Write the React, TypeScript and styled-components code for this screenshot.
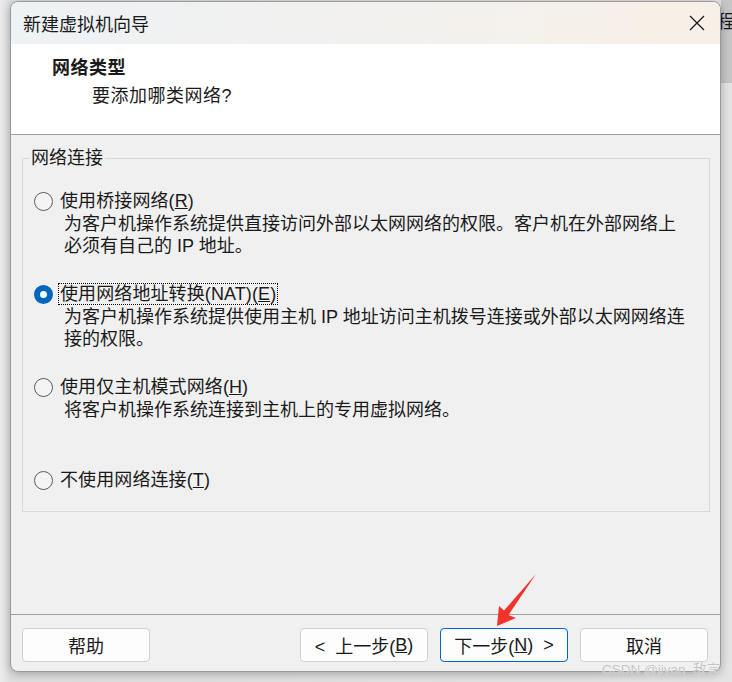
import React from 'react';
import styled, { createGlobalStyle } from 'styled-components';

const GlobalStyle = createGlobalStyle`
  html, body {
    margin: 0;
    padding: 0;
  }
  body {
    width: 732px;
    height: 682px;
    overflow: hidden;
    background: #e2e2e2;
    font-family: "Liberation Sans", "Noto Sans CJK SC", sans-serif;
    color: #1a1a1a;
  }
`;

const Page = styled.div`
  position: relative;
  display: flex;
  align-items: flex-start;
  height: 682px;
  padding: 1px 0 0 10px;
  box-sizing: border-box;
  background: linear-gradient(90deg, #ececec 0px, #dedede 10px, #e4e4e4 100%);
`;

const Dialog = styled.div`
  position: relative;
  z-index: 1;
  width: 711px;
  height: 671px;
  box-sizing: border-box;
  display: flex;
  flex-direction: column;
  border: 1px solid #9a9a9a;
  border-radius: 8px;
  overflow: hidden;
  background: #f0f0f0;
  box-shadow: 0 2px 10px rgba(0, 0, 0, 0.28);
`;

const TitleBar = styled.div`
  height: 42px;
  display: flex;
  align-items: center;
  justify-content: space-between;
  padding-left: 12px;
  background: linear-gradient(90deg, #edf2f5 0%, #f3f1ee 55%, #f8f0e6 100%);
  font-size: 18px;
`;

const CloseButton = styled.div`
  width: 46px;
  height: 42px;
  display: flex;
  align-items: center;
  justify-content: center;
`;

const Header = styled.div`
  height: 91px;
  box-sizing: border-box;
  padding: 13px 0 0 41px;
  background: #fff;
  border-bottom: 1px solid #a0a0a0;
`;

const Heading = styled.div`
  font-size: 18px;
  line-height: 22px;
  font-weight: bold;
  letter-spacing: 0.5px;
`;

const SubHeading = styled.div`
  margin: 6px 0 0 40px;
  font-size: 18px;
  line-height: 22px;
  letter-spacing: 0.5px;
`;

const Body = styled.div`
  flex: 1;
  padding: 12px 10px 0 11px;
`;

const GroupBox = styled.fieldset`
  margin: 0;
  padding: 20px 10px 19px 11px;
  border: 1px solid #d9d9d9;
  min-width: 0;
`;

const Legend = styled.legend`
  margin-left: -5px;
  padding: 0 2px;
  font-size: 18px;
  line-height: 22px;
`;

const Option = styled.div`
  & + & {
    margin-top: 25px;
  }
`;

const OptionRow = styled.div`
  display: flex;
  align-items: center;
  height: 24px;
  gap: 5px;
`;

const Radio = styled.span<{ $checked?: boolean }>`
  width: 19px;
  height: 19px;
  box-sizing: border-box;
  border-radius: 50%;
  border: ${(p) => (p.$checked ? '6px solid #0067c0' : '1px solid #5c5c5c')};
  background: ${(p) => (p.$checked ? '#fff' : '#f4f4f4')};
  flex: none;
`;

const OptionLabel = styled.span<{ $focused?: boolean }>`
  padding: 0 1px;
  font-size: 18px;
  line-height: 20px;
  letter-spacing: 0.1px;
  border: 1px ${(p) => (p.$focused ? 'dotted #000' : 'solid transparent')};
`;

const Description = styled.div`
  margin-left: 30px;
  min-height: 44px;
  font-size: 18px;
  line-height: 22px;
  white-space: nowrap;
`;

const Footer = styled.div`
  height: 57px;
  box-sizing: border-box;
  display: flex;
  gap: 12px;
  padding: 13px 12px 0 11px;
  border-top: 1px solid #a0a0a0;
`;

const Button = styled.div<{ $primary?: boolean; $push?: boolean }>`
  width: 128px;
  height: 34px;
  box-sizing: border-box;
  display: flex;
  align-items: center;
  justify-content: center;
  border: 1px solid ${(p) => (p.$primary ? '#0067c0' : '#d0d0d0')};
  border-radius: 4px;
  background: #fdfdfd;
  font-size: 18px;
  margin-left: ${(p) => (p.$push ? 'auto' : '0')};
  white-space: pre;
`;

const SideWindow = styled.div`
  flex: 1;
  margin-top: -1px;
  height: 83px;
  overflow: hidden;
  background: #c6c6c6;
  font-size: 18px;
  line-height: 44px;
  text-indent: -4px;
`;

const Annotation = styled.svg`
  position: absolute;
  left: 490px;
  top: 570px;
  z-index: 2;
`;

const Watermark = styled.div`
  position: absolute;
  right: 12px;
  bottom: 4px;
  z-index: 2;
  font-size: 13.5px;
  color: #c4c4c4;
  text-shadow: 0 0 1px #fff;
`;

const options = [
  {
    label: '使用桥接网络(',
    key: 'R',
    lines: ['为客户机操作系统提供直接访问外部以太网网络的权限。客户机在外部网络上', '必须有自己的 IP 地址。'],
  },
  {
    label: '使用网络地址转换(NAT)(',
    key: 'E',
    checked: true,
    lines: ['为客户机操作系统提供使用主机 IP 地址访问主机拨号连接或外部以太网网络连', '接的权限。'],
  },
  {
    label: '使用仅主机模式网络(',
    key: 'H',
    lines: ['将客户机操作系统连接到主机上的专用虚拟网络。'],
  },
  {
    label: '不使用网络连接(',
    key: 'T',
    lines: [],
  },
];

export default function App() {
  return (
    <Page>
      <GlobalStyle />
      <Dialog>
        <TitleBar>
          新建虚拟机向导
          <CloseButton>
            <svg width="16" height="16" viewBox="0 0 16 16">
              <path d="M1 1 L15 15 M15 1 L1 15" stroke="#1a1a1a" strokeWidth="1.3" />
            </svg>
          </CloseButton>
        </TitleBar>
        <Header>
          <Heading>网络类型</Heading>
          <SubHeading>要添加哪类网络?</SubHeading>
        </Header>
        <Body>
          <GroupBox>
            <Legend>网络连接</Legend>
            {options.map((o) => (
              <Option key={o.key}>
                <OptionRow>
                  <Radio $checked={o.checked} />
                  <OptionLabel $focused={o.checked}>
                    {o.label}
                    <u>{o.key}</u>)
                  </OptionLabel>
                </OptionRow>
                {o.lines.length > 0 && (
                  <Description>
                    {o.lines.map((l) => (
                      <div key={l}>{l}</div>
                    ))}
                  </Description>
                )}
              </Option>
            ))}
          </GroupBox>
        </Body>
        <Footer>
          <Button>帮助</Button>
          <Button $push>
            {'<  上一步('}
            <u>B</u>)
          </Button>
          <Button $primary>
            下一步(<u>N</u>){'  >'}
          </Button>
          <Button>取消</Button>
        </Footer>
      </Dialog>
      <SideWindow>程</SideWindow>
      <Annotation width="50" height="60" viewBox="0 0 50 60">
        <polygon points="7,56 9,36 14,40.5 46,4 18.5,45 26,48" fill="#f2322b" />
      </Annotation>
      <Watermark>CSDN @jiyan_敌言</Watermark>
    </Page>
  );
}
